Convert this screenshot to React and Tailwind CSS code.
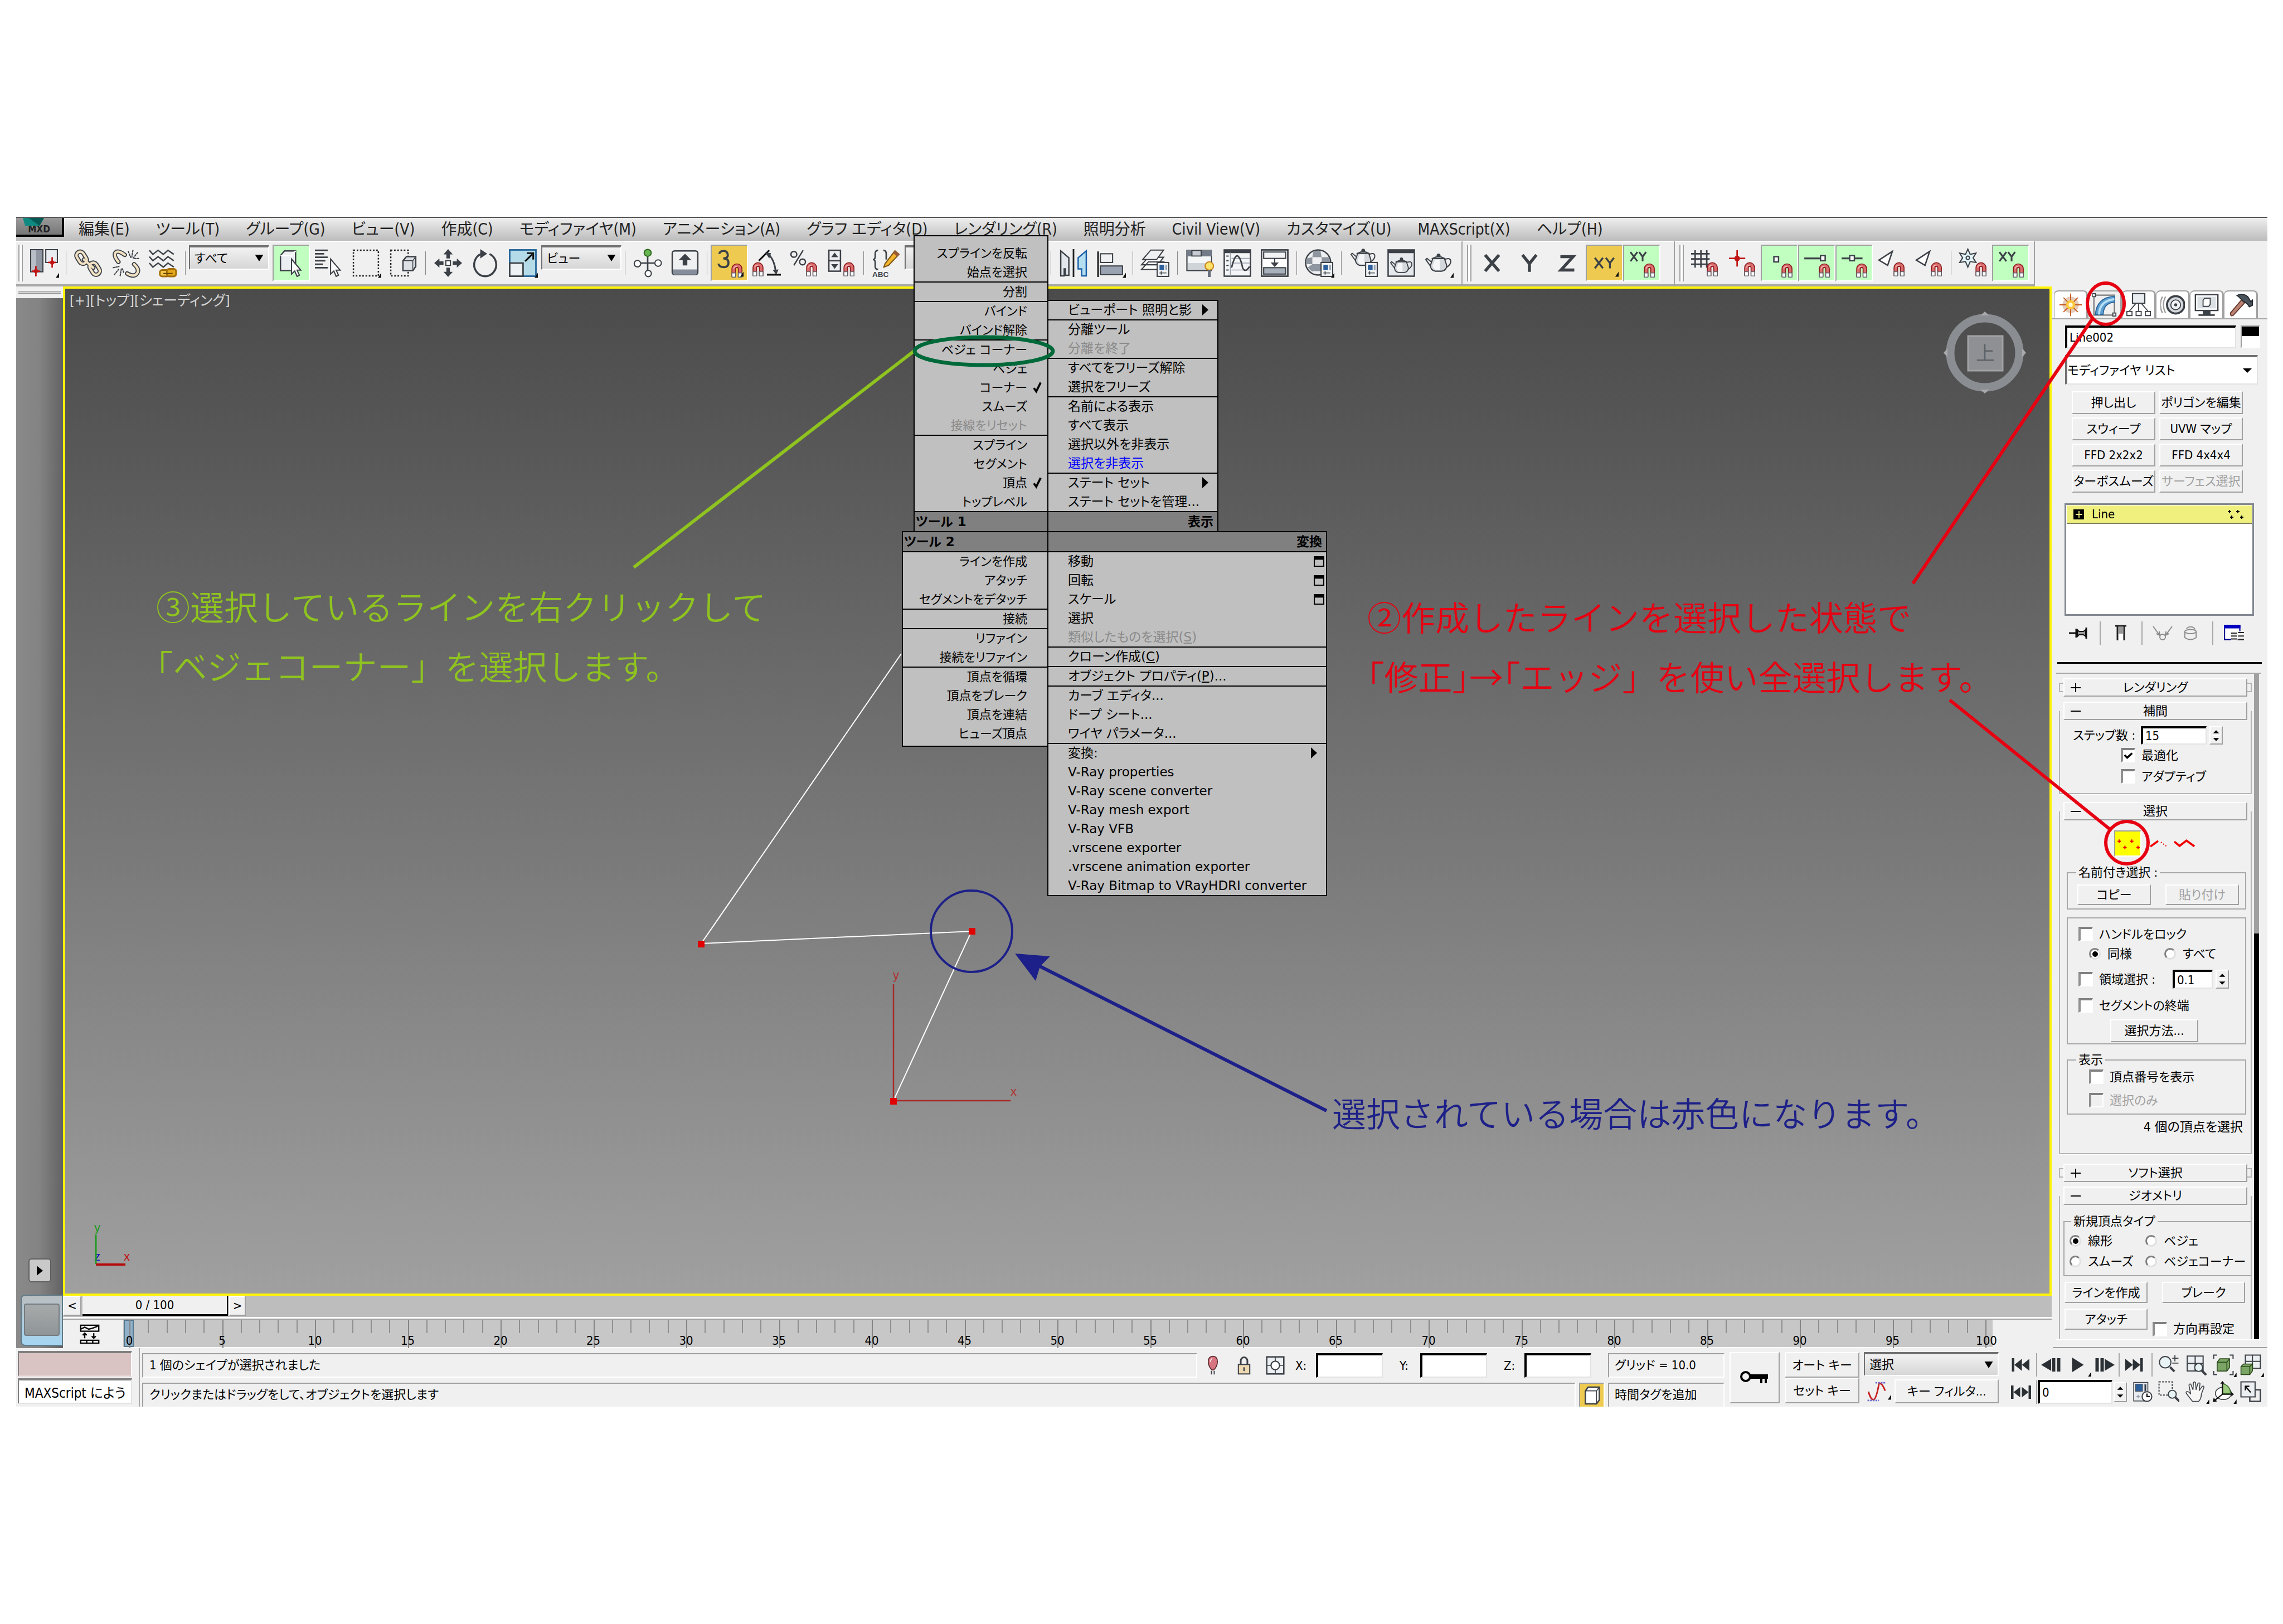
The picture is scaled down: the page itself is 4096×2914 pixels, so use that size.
/**
 * 3D modeller workspace with an annotated tutorial layer on top
 */
import { clsx } from 'clsx';

const RAISED = 'border-2 border-t-white border-l-white border-r-[#a0a0a0] border-b-[#a0a0a0] bg-[#f0f0f0]';
const SUNKEN = 'border-2 border-t-[#a0a0a0] border-l-[#a0a0a0] border-r-white border-b-white';
const FIELD = 'border-t-4 border-l-4 border-r-2 border-b-2 border-t-black border-l-black border-r-[#e3e3e3] border-b-[#e3e3e3] bg-white';
const INK = '#3c4147';

/* ---------- Icons ---------- */

const Magnet = ({ y = 0 }) => (
    <g transform={`translate(0 ${y})`}>
        <path d="M14 22.5V16a4.300 4.300 0 0 1 8.600 0v6.500h-3.100v-6.500a1.200 1.200 0 0 0-2.400 0v6.500z" fill="#dc6e70" stroke="#8a1a1a" strokeWidth=".8" />
        <path d="M14 19.5h3.1v3.6H14zM19.5 19.5h3.1v3.6h-3.1z" fill="#fff" stroke="#5d6570" strokeWidth=".7" />
        <path d="M15.4 15.8a3 3 0 0 1 3-2" fill="none" stroke="#f5b8b8" strokeWidth=".8" />
    </g>
);

const Panel = () => (
    <g>
        <rect x="13.5" y="11.5" width="10" height="12" fill="#f2f4f6" stroke={INK} />
        <rect x="15.5" y="13.5" width="4" height="4.5" fill="#2c5f9b" />
        <rect x="20.5" y="13.5" width="1.5" height="4.5" fill="#9aa4b2" />
        <path d="M15.5 20.5h6M17 19v3" stroke={INK} strokeWidth=".8" />
    </g>
);

const Pot = ({ x = 0, y = 0, s = 1 }) => (
    <g transform={`translate(${x} ${y}) scale(${s})`} stroke={INK} strokeWidth="1">
        <path d="M17 9q5-2 5.5 1t-4 6M7 12L2 8 1 9l5 7" fill="none" />
        <path d="M7 8h10l2 6q0 4-4 5H9q-4-1-4-5z" fill="#d4d8dc" />
        <path d="M9 9h4v9h-3q-3-1-3-4z" fill="#f5f6f7" stroke="none" />
        <path d="M7 8q5-3 10 0z" fill="#f5f6f7" />
        <circle cx="12" cy="5.5" r="1.2" fill={INK} />
    </g>
);

const ICONS = {
    layoutFlyout: (
        <>
            <path d="M.5.5h10.5v19H.5z" fill="#9097a3" stroke={INK} />
            <path d="M1 1h4v18H1z" fill="#b9bfc8" />
            <path d="M13.5.5h10v11h-10z" fill="#e8ebef" stroke={INK} />
            <path d="M5 14.5v9M1.5 19h7M19 7v9M15.5 11.5h7" stroke="#c01414" strokeWidth="1.3" />
            <circle cx="5" cy="19" r="1.8" fill="#c01414" />
            <circle cx="19" cy="11.5" r="1.8" fill="#c01414" />
        </>
    ),
    link: (
        <g fill="none" strokeLinecap="round">
            <g stroke={INK} strokeWidth="3.8">
                <rect x="2.5" y="1.8" width="6.5" height="11" rx="3.2" transform="rotate(-32 6 7)" />
                <rect x="14" y="11.5" width="6.5" height="11" rx="3.2" transform="rotate(-32 17 17)" />
                <path d="M8 9l8 7" />
            </g>
            <g stroke="#f3e3c4" strokeWidth="2">
                <rect x="2.5" y="1.8" width="6.5" height="11" rx="3.2" transform="rotate(-32 6 7)" />
                <rect x="14" y="11.5" width="6.5" height="11" rx="3.2" transform="rotate(-32 17 17)" />
                <path d="M8 9l8 7" />
            </g>
        </g>
    ),
    unlink: (
        <g fill="none" strokeLinecap="round">
            <g stroke={INK} strokeWidth="3.8">
                <path d="M5.5 11Q1 5.5 3 3t8 2M13 21q6 3.5 8.5 0T19 13" />
            </g>
            <g stroke="#f3e3c4" strokeWidth="2">
                <path d="M5.5 11Q1 5.5 3 3t8 2M13 21q6 3.5 8.5 0T19 13" />
            </g>
            <path d="M14 2l2 5M18 1l-1 6M22 3l-4 5M23 8h-4M1 16l5-1M2 22l4-5M7 23l1-6M10 20l-1-3" stroke={INK} strokeWidth="1" strokeDasharray="1.2 1.2" />
        </g>
    ),
    warp: (
        <>
            <path d="M0 1l3 3.5L7.5 1 12 4.5 16 1l5 3.5M0 6.5L3 10l4.5-3.5L12 10l4-3.5L21 10M0 12l3 3.5L7.500 12l4.500 3.500L16 12l5 3.500" fill="none" stroke={INK} strokeWidth="1.2" />
            <rect x="9" y="18" width="8" height="5.5" rx="2" fill="#f2c94c" stroke="#a36d00" strokeWidth="1.4" />
            <rect x="15" y="17" width="8" height="6.5" rx="2" fill="#e3a81c" stroke="#a36d00" strokeWidth="1.4" />
            <path d="M12 21h8" stroke="#6b4500" />
        </>
    ),
    select: (
        <>
            <path d="M2.5 5.5L6 1.5h9.5v13l-3.5 4H2.500z" fill="#eceff2" stroke={INK} strokeWidth="1.2" />
            <path d="M2.5 5.5H12v13M12 5.5l3.5-4" fill="none" stroke="#fff" strokeWidth="1.2" />
            <path d="M12 8.5v13l2.8-2.6 2 4.6 2-1-2-4.400H20z" fill="#fff" stroke={INK} />
        </>
    ),
    byName: (
        <>
            <path d="M0 1h11M0 4h8M0 7h11M0 10h9M0 13h7M0 16h11" stroke={INK} strokeWidth="1.4" />
            <path d="M13.5 8.5v13l2.8-2.6 2 4.6 2-1-2-4.400h3.400z" fill="#fff" stroke={INK} />
        </>
    ),
    rect: <rect x="1" y="1" width="21.5" height="22" fill="none" stroke="#222" strokeWidth="1.2" strokeDasharray="1.4 1.4" />,
    crossing: (
        <>
            <rect x="1" y="1" width="15" height="22" fill="none" stroke="#222" strokeWidth="1.2" strokeDasharray="1.4 1.4" />
            <path d="M11.5 10l3-3.5h8V15L20 18.5h-8.5z" fill="#dde1e5" stroke={INK} strokeWidth="1.2" />
            <path d="M11.5 10H20v8.5M20 10l2.5-3.5" fill="none" stroke={INK} strokeWidth=".7" />
        </>
    ),
    move: (
        <g fill={INK}>
            <path d="M12 0l4 4.5h-2.5v3.5h-3V4.5H8zM12 24l4-4.5h-2.5V16h-3v3.5H8zM0 12l4.5-4v2.5H8v3H4.5V16zM24 12l-4.5-4v2.5H16v3h3.5V16z" />
            <rect x="10" y="10" width="4" height="4" fill="#fff" stroke={INK} />
        </g>
    ),
    rotate: (
        <>
            <path d="M15.5 4.2A9.5 10 0 1 1 8.5 4" fill="none" stroke={INK} strokeWidth="1.7" />
            <path d="M7.5 0l6 4-6 4z" fill={INK} />
        </>
    ),
    scale: (
        <>
            <rect x=".7" y=".7" width="22.6" height="22.6" fill="#b5dbe9" stroke="#1d5f97" strokeWidth="1.3" />
            <rect x=".7" y="12" width="11.5" height="11.3" fill="#eef1f3" stroke={INK} strokeWidth="1.3" />
            <path d="M14 10.5l6-6M15.5 3.5h5.5V9" fill="none" stroke="#111" strokeWidth="1.5" />
        </>
    ),
    pivot: (
        <>
            <path d="M12 4v17M4 12h17" stroke={INK} strokeWidth="1.3" />
            <circle cx="12" cy="3.2" r="3" fill="#69b553" stroke="#2b6b1d" />
            <circle cx="3.2" cy="12.5" r="2.8" fill="#fff" stroke={INK} />
            <circle cx="21" cy="12" r="2.8" fill="#fff" stroke={INK} />
            <circle cx="12.5" cy="21" r="2.7" fill="#fff" stroke={INK} />
        </>
    ),
    override: (
        <>
            <rect x="1" y="1.5" width="22" height="20.5" rx="2" fill="#eef0f2" stroke={INK} strokeWidth="1.2" />
            <path d="M1.5 17.5h21V20q0 2-2 2h-17q-2 0-2-2z" fill="#868e9b" />
            <path d="M12 4l5.5 5.5H14V14h-4V9.5H6.5z" fill={INK} />
        </>
    ),
    snap3: (
        <>
            <path d="M3 4q1-2.500 4-2.500T10.500 5q0 3-4 3 4.500 0 4.500 3.800T6.800 15.500 2.500 12.500" fill="none" stroke={INK} strokeWidth="1.8" />
            <Magnet y={1} />
        </>
    ),
    angle: (
        <>
            <path d="M5 10L14 1M12 22h12" stroke="#111" strokeWidth="1.5" />
            <path d="M13 4q6 6 6.5 16" fill="none" stroke={INK} strokeWidth="1.4" />
            <path d="M10.5 3l5 .5-1.5 4.5zM17 18l5-.5-2 4.500z" fill={INK} />
            <g transform="translate(-14 0)"><Magnet /></g>
        </>
    ),
    percent: (
        <>
            <circle cx="3" cy="4.5" r="2.5" fill="none" stroke={INK} strokeWidth="1.2" />
            <circle cx="10.5" cy="11" r="2.5" fill="none" stroke={INK} strokeWidth="1.2" />
            <path d="M11 1L3 14" stroke={INK} strokeWidth="1.2" />
            <Magnet />
        </>
    ),
    spinner: (
        <>
            <rect x="1" y="1" width="10" height="18" fill="#eceef1" stroke={INK} strokeWidth="1.2" />
            <path d="M1 10h10" stroke={INK} strokeWidth="1.2" />
            <path d="M6 3l3 4H3zM6 17l3-4H3z" fill={INK} />
            <Magnet />
        </>
    ),
    nameSets: (
        <>
            <path d="M5 1Q2.5 1 2.5 4v2.5Q2.5 9 .5 9q2 0 2 2.5V15q0 2.5 2.5 2.500M9.500 1Q12 1 12 4v5" fill="none" stroke={INK} strokeWidth="1.3" />
            <path d="M11 12.5L19.5 1.5 23 4.5 14 14l-4 1.5z" fill="#f4b52e" stroke="#7a5313" />
            <path d="M19.5 1.5L23 4.5l-1.5 2-3.5-3z" fill="#9c5b3b" />
            <text x="0" y="24" fontSize="6.5" fontWeight="700" fontFamily="Liberation Sans" fill={INK}>ABC</text>
        </>
    ),
    mirror: (
        <>
            <path d="M1 1.5l7 6v15H5V17H4v6H1z" fill="#e2e5ea" stroke={INK} strokeWidth="1.2" />
            <path d="M12 0v24" stroke="#222" strokeWidth="1.4" />
            <path d="M23 1.5l-7 6V17h3v6h4z" fill="#b5dff0" stroke="#1d5fa7" strokeWidth="1.2" />
        </>
    ),
    align: (
        <>
            <path d="M1 2v22" stroke="#222" strokeWidth="1.5" />
            <rect x="3" y="4" width="10.5" height="7.5" fill="#eef0f2" stroke={INK} />
            <rect x="3" y="14.5" width="19" height="7.5" fill="#9aa3b1" stroke={INK} />
        </>
    ),
    layers: (
        <>
            <path d="M0 17.5h14L19 11H6zM0 13.5h14L19 7H6z" fill="#fff" stroke={INK} />
            <path d="M1 9h12L19 .8H8z" fill="#eef0f2" stroke={INK} />
            <Panel />
        </>
    ),
    ribbon: (
        <>
            <rect x=".7" y="1" width="21" height="17.5" fill="#cfd4d9" stroke={INK} />
            <path d="M1 1h21v5H1z" fill="#737b89" />
            <path d="M5 1h8v5H5z" fill="#c8ccd2" stroke={INK} />
            <path d="M1.5 6.5h20V12h-20z" fill="#f4f5f6" />
            <circle cx="20" cy="14.5" r="3.6" fill="#ffe36b" stroke="#c98318" />
            <path d="M20 18v6" stroke="#66707c" strokeWidth="2.5" />
        </>
    ),
    curve: (
        <>
            <rect x=".7" y=".7" width="22.6" height="22.6" fill="#f4f5f6" stroke={INK} strokeWidth="1.2" />
            <path d="M.5.5h23v3H.5z" fill={INK} />
            <path d="M6 3v20M7 8h16M7 12h16M7 18h16" stroke="#98a0aa" strokeWidth=".8" />
            <path d="M2.5 6h2M2.5 10h2M2.5 14h2M2.5 18h2" stroke={INK} />
            <path d="M7 16q3-12 5.5-10t4 10q2 5 6-1" fill="none" stroke={INK} strokeWidth="1.3" />
        </>
    ),
    schematic: (
        <>
            <rect x=".7" y=".7" width="22.6" height="22.6" fill="#fff" stroke={INK} strokeWidth="1.3" />
            <rect x="2.5" y="2.5" width="19" height="5.5" fill="#f2f3f5" stroke={INK} />
            <rect x="2.5" y="16" width="19" height="5.5" fill="#a8b0bc" stroke={INK} />
            <path d="M12 8v5" stroke={INK} />
            <path d="M8.5 11.5h7L12 15.5z" fill={INK} />
        </>
    ),
    material: (
        <>
            <circle cx="11" cy="11.5" r="10.8" fill="#eef0f2" stroke={INK} strokeWidth="1.2" />
            <path d="M7 1.500h6l1 5.500H6zM.8 8L6 7v6H.5zM14 7h6.500l1 5.500H14zM6 13h8v6H6zM2 16l4-3v6.500zM14 19h4l-4 3z" fill="#8f969f" />
            <Panel />
        </>
    ),
    renderSetup: (<><Pot x={0} y={-4} s={0.95} /><Panel /></>),
    frameWindow: (
        <>
            <rect x=".7" y=".7" width="22.6" height="22.6" fill="#e6e9ec" stroke={INK} strokeWidth="1.2" />
            <path d="M.5.5h23v3H.5z" fill={INK} />
            <Pot x={2} y={4} s={0.85} />
        </>
    ),
    render: <Pot />,
    axisX: <path d="M5.5 5l12 14M17.5 5l-12 14" stroke={INK} strokeWidth="2.6" />,
    axisY: <path d="M5.5 5l6 7.5 6-7.5M11.5 12v7.5" fill="none" stroke={INK} strokeWidth="2.6" />,
    axisZ: <path d="M6 6.5h11L6.5 18H18" fill="none" stroke={INK} strokeWidth="2.6" />,
    planeXY: <path d="M3.5 7.5l7 9M10.5 7.5l-7 9M13 7.5l3.5 4.5L20 7.5M16.5 12v4.5" fill="none" stroke={INK} strokeWidth="1.6" />,
    snapXY: (
        <>
            <path d="M2 2.5l6 8M8 2.5l-6 8M9.5 2.5l3 4 3-4M12.5 6.5v4" fill="none" stroke={INK} strokeWidth="1.5" />
            <Magnet y={1} />
        </>
    ),
    grid: (
        <>
            <path d="M3.5 1v15M8.5 1v15M13.5 1v15M0 4h16M0 8.5h16M0 13h16" stroke={INK} strokeWidth="1.3" />
            <Magnet />
        </>
    ),
    snapPivot: (
        <>
            <path d="M7.5 1v14M.5 8h14" stroke="#c01414" strokeWidth="1.3" />
            <circle cx="7.5" cy="8" r="2.4" fill="#c01414" />
            <Magnet />
        </>
    ),
    vertex: (<><rect x="7" y="6.5" width="4" height="4.5" fill="#fff" stroke={INK} strokeWidth="1.2" /><Magnet y={1} /></>),
    endpoint: (<><path d="M1 8h14" stroke={INK} strokeWidth="1.6" /><rect x="15" y="5.5" width="4" height="4.5" fill="#fff" stroke={INK} strokeWidth="1.2" /><Magnet y={1} /></>),
    midpoint: (<><path d="M1 8h18" stroke={INK} strokeWidth="1.6" /><rect x="8" y="5.5" width="4" height="4.5" fill="#fff" stroke={INK} strokeWidth="1.2" /><Magnet y={1} /></>),
    face: (<><path d="M12.5 2L1 9.5l7.5 4.5z" fill="#fff" stroke={INK} strokeWidth="1.2" /><Magnet /></>),
    freeze: (
        <>
            <path d="M7 0l2 4.500 5-1L11.500 7.500 14 11.500l-5-.8L7 15.500l-2-4.800-5 .8 2.500-4L0 3.500l5 1z" fill="#e4f6fa" stroke={INK} />
            <circle cx="7" cy="7.5" r="1.5" fill="none" stroke={INK} />
            <Magnet />
        </>
    ),
};

const Icon = ({ name, className = 'size-[50px]' }) => (
    <svg viewBox="0 0 24 24" className={clsx('shrink-0 overflow-visible', className)} aria-hidden="true">{ICONS[name]}</svg>
);

const Corner = () => (
    <svg viewBox="0 0 4 6" className="absolute right-1.5 bottom-1.5 h-2.5 w-1.5" aria-hidden="true"><path d="M4 0v6H0z" fill="#111" /></svg>
);

/* ---------- Toolbar ---------- */

const ToolButton = ({ icon, tone, flyout }) => (
    <button
        aria-label={icon}
        className={clsx(
            'relative flex h-[66px] w-[67px] shrink-0 items-center justify-center',
            tone && SUNKEN,
            tone === 'green' && 'bg-[#c1ffc1]',
            tone === 'amber' && 'bg-[#eecb50]',
        )}
    >
        <Icon name={icon} />
        {flyout && <Corner />}
    </button>
);

const Sep = () => <div className="mx-[6px] h-[42px] w-px shrink-0 bg-[#8c8c8c]" />;
const Grip = () => <div className="mx-1 h-[66px] w-[8px] shrink-0 border-x-2 border-[#a0a0a0] bg-white" />;

const DropDown = ({ label, value, className }) => (
    <div className={clsx('relative flex shrink-0 self-start border-2 border-t-4 border-[#707070] border-r-white border-b-white bg-linear-to-b from-[#f2f2f2] to-[#d6d6d6]', className)}>
        <select aria-label={label} className="w-full appearance-none pl-2 text-[22px]">
            <option>{value}</option>
        </select>
        <svg viewBox="0 0 10 8" className="pointer-events-none absolute top-1/2 right-2 h-3 w-4 -translate-y-1/2" aria-hidden="true"><path d="M0 0h10L5 8z" fill="#000" /></svg>
    </div>
);

const MENUS = ['編集(E)', 'ツール(T)', 'グループ(G)', 'ビュー(V)', '作成(C)', 'モディファイヤ(M)', 'アニメーション(A)', 'グラフ エディタ(D)', 'レンダリング(R)', '照明分析', 'Civil View(V)', 'カスタマイズ(U)', 'MAXScript(X)', 'ヘルプ(H)'];

const MenuBar = () => (
    <nav className="flex h-[43px] shrink-0 items-center border-t-2 border-[#555] bg-linear-to-b from-[#efefef] to-[#bcbcbc] text-[28px] text-[#222]">
        <button className="relative mr-[26px] flex h-[34px] w-[86px] shrink-0 items-end justify-center self-start border-r-4 border-b-4 border-black bg-linear-to-b from-[#9a9a9a] to-[#777] text-[17px] leading-[19px] font-bold">
            <svg viewBox="0 0 48 14" className="absolute top-0 left-3 h-3.5 w-12" aria-hidden="true"><path d="M0 0h38l-8 14H4z" fill="#0e8a80" /><path d="M10 0h28l-8 14z" fill="#075a56" /></svg>
            MXD
        </button>
        <ul className="flex gap-[47px] leading-[36px] whitespace-nowrap">
            {MENUS.map((m) => (
                <li key={m}><button>{m}</button></li>
            ))}
        </ul>
    </nav>
);

const BAR = 'flex h-[82px] items-center border-t-2 border-b-4 border-r-2 border-t-white border-b-[#a8a8a8] border-r-[#a0a0a0]';

const ToolBar = () => (
    <div className="flex shrink-0 bg-[#f0f0f0]">
        <div className={BAR}>
            <Grip />
            <ToolButton icon="layoutFlyout" flyout />
            <Sep />
            <ToolButton icon="link" />
            <ToolButton icon="unlink" />
            <ToolButton icon="warp" />
            <Sep />
            <DropDown label="選択フィルタ" value="すべて" className="mt-1.5 mr-[6px] h-[44px] w-[144px]" />
            <ToolButton icon="select" tone="green" />
            <ToolButton icon="byName" />
            <ToolButton icon="rect" flyout />
            <ToolButton icon="crossing" />
            <Sep />
            <ToolButton icon="move" />
            <ToolButton icon="rotate" />
            <ToolButton icon="scale" flyout />
            <DropDown label="参照座標系" value="ビュー" className="mt-1.5 h-[44px] w-[144px]" />
            <Sep />
            <ToolButton icon="pivot" />
            <ToolButton icon="override" />
            <Sep />
            <ToolButton icon="snap3" tone="amber" flyout />
            <ToolButton icon="angle" />
            <ToolButton icon="percent" />
            <ToolButton icon="spinner" />
            <Sep />
            <ToolButton icon="nameSets" />
            <DropDown label="選択セット" value="" className="mt-1.5 h-[44px] w-[256px]" />
            <Sep />
            <ToolButton icon="mirror" />
            <ToolButton icon="align" flyout />
            <Sep />
            <ToolButton icon="layers" />
            <Sep />
            <ToolButton icon="ribbon" />
            <ToolButton icon="curve" />
            <ToolButton icon="schematic" />
            <Sep />
            <ToolButton icon="material" flyout />
            <Sep />
            <ToolButton icon="renderSetup" />
            <ToolButton icon="frameWindow" />
            <ToolButton icon="render" flyout />
            <div className="w-2" />
        </div>
        <div className={clsx(BAR, 'pr-6 pl-1')}>
            <Grip />
            <ToolButton icon="axisX" />
            <ToolButton icon="axisY" />
            <ToolButton icon="axisZ" />
            <ToolButton icon="planeXY" tone="amber" flyout />
            <ToolButton icon="snapXY" tone="green" />
        </div>
        <div className={clsx(BAR, 'pr-2 pl-1')}>
            <Grip />
            <ToolButton icon="grid" />
            <ToolButton icon="snapPivot" />
            <ToolButton icon="vertex" tone="green" />
            <ToolButton icon="endpoint" tone="green" />
            <ToolButton icon="midpoint" tone="green" />
            <ToolButton icon="face" />
            <ToolButton icon="face" />
            <Sep />
            <ToolButton icon="freeze" />
            <ToolButton icon="snapXY" tone="green" />
        </div>
    </div>
);

/* ---------- Viewport ---------- */

const SideRail = () => (
    <div className="flex w-[84px] shrink-0 flex-col">
        <div className="h-[21px] px-1 pt-2"><div className="h-[5px] border-y-2 border-t-[#b8b8b8] border-b-[#8f8f8f]" /></div>
        <div className="flex flex-1 flex-col items-center justify-end bg-linear-to-r from-[#8a8a8a] via-[#838383] to-[#636363] pb-1">
            <button aria-label="再生パネルを開く" className="flex h-[43px] w-[41px] items-center justify-center rounded-md border-2 border-[#5f5f5f] bg-[#c9c9c9]">
                <svg viewBox="0 0 10 16" className="h-[18px] w-[11px]" aria-hidden="true"><path d="M0 0l10 8-10 8z" /></svg>
            </button>
            <div className="mt-[22px] ml-[8px] flex h-[92px] w-[76px] rounded-l-lg border-2 border-[#5f7a88] bg-linear-to-b from-[#b9bec1] to-[#a5d6f2] pt-3.5 pr-[4px] pb-[16px] pl-1">
                <button aria-label="レイアウト" className="flex-1 rounded-sm border-2 border-[#747b80] bg-linear-to-b from-[#a7aaab] to-[#8f9597]" />
            </div>
        </div>
    </div>
);

const Viewport = () => (
    <main className="relative min-h-0 flex-1 border-4 border-[#fff30a] bg-linear-to-b from-[#4b4b4b] to-[#a0a0a0]">
        <p className="px-2 pt-1 text-[25px] leading-[36px] text-[#d6d6d6]">[+][トップ][シェーディング]</p>
        <svg viewBox="117 518 3560 1803" preserveAspectRatio="none" className="absolute inset-0 h-full w-full" aria-hidden="true">
            <path d="M1617 1173L1258 1693 1743 1671 1603 1975" fill="none" stroke="#fff" strokeWidth="2" />
            <path d="M1603 1975V1766M1603 1975H1813" fill="none" stroke="#a82a2a" strokeWidth="2.5" />
            <g fill="#e00000">
                <rect x="1252" y="1688" width="12" height="12" />
                <rect x="1738" y="1665" width="12" height="12" />
                <rect x="1597" y="1970" width="12" height="12" />
            </g>
            <g fontFamily="Liberation Sans" fontSize="22">
                <text x="1602" y="1757" fill="#b03030">y</text>
                <text x="1813" y="1966" fill="#b03030">x</text>
                <text x="169" y="2210" fill="#1e9a1e">y</text>
                <text x="169" y="2262" fill="#1010c0">z</text>
                <text x="222" y="2262" fill="#c01010">x</text>
            </g>
            <path d="M172 2216v52" stroke="#1e9a1e" strokeWidth="3" />
            <path d="M172 2269h53" stroke="#b40c0c" strokeWidth="4" />
            <circle cx="3561" cy="633" r="62" fill="none" stroke="#8a8d92" strokeWidth="15" />
            <g fill="#a7a9ad">
                <path d="M3553 566h16l-8-7zM3553 699h16l-8 7zM3494 625v16l-7-8zM3628 625v16l7-8z" />
            </g>
            <rect x="3531" y="603" width="62" height="62" fill="#8f9093" stroke="#a2a3a6" strokeWidth="3" />
            <text x="3562" y="646" textAnchor="middle" fontSize="34" fontFamily="'Noto Sans CJK JP'" fill="#606166">上</text>
        </svg>
    </main>
);

const GROUPS = Array.from({ length: 20 }, (_, i) => i * 5);

const FrameMark = ({ n }) => (
    <span className="absolute top-[26px] left-0 -translate-x-1/2 text-[22px] leading-[24px]">{n}</span>
);

const TimeLine = () => (
    <div className="shrink-0">
        <div className="flex h-[41px] border-b-3 border-white bg-[#bdbdbd]">
            <button className={clsx(RAISED, 'mr-[2px] h-[36px] w-[33px] text-[22px] leading-[32px]')}>&lt;</button>
            <button className="h-[36px] w-[261px] border-r-2 border-b-3 border-black bg-[#f0f0f0] text-[22px] leading-[34px]">0 / 100</button>
            <button className={clsx(RAISED, 'ml-[2px] h-[36px] w-[30px] text-[22px] leading-[32px]')}>&gt;</button>
        </div>
        <div className="flex h-[53px] border-t-2 border-[#a0a0a0]">
            <button aria-label="ミニ カーブ エディタを開く" className="flex w-[108px] shrink-0 items-center justify-center bg-[#f0f0f0] pr-3">
                <svg viewBox="0 0 20 20" className="h-[36px] w-[36px]" fill="none" stroke="#000" strokeWidth="1.3" aria-hidden="true">
                    <path d="M1 1h18v6H1zM1 5l4-2 4 2 4-1 5-2M5 14V9M3 11l2-2 2 2M14 9v5M12 12l2 2 2-2M1 16h18v3H1zM7 16v3M13 16v3" />
                </svg>
            </button>
            <div className="mr-[106px] flex flex-1 border-b-2 border-white bg-[#c7c7c7] pr-[11px] pl-[11px]">
                {GROUPS.map((g) => (
                    <div key={g} className={clsx('relative flex flex-1', g === 0 && 'before:absolute before:inset-y-0 before:-left-[10px] before:w-[18px] before:border-2 before:border-[#56788f] before:bg-[#8fb0c8]')}>
                        <div className="relative h-[51px] flex-1 border-l-2 border-[#858585]" />
                        <div className="h-[24px] flex-1 border-l-2 border-[#8f8f8f]" />
                        <div className="h-[24px] flex-1 border-l-2 border-[#8f8f8f]" />
                        <div className="h-[24px] flex-1 border-l-2 border-[#8f8f8f]" />
                        <div className="h-[24px] flex-1 border-l-2 border-[#8f8f8f]" />
                        <FrameMark n={g} />
                    </div>
                ))}
                <div className="relative h-[51px] border-l-2 border-[#858585]"><FrameMark n={100} /></div>
            </div>
        </div>
    </div>
);

/* ---------- Command panel ---------- */

const PushButton = ({ children, disabled, className }) => (
    <button disabled={disabled} className={clsx(RAISED, 'flex items-center justify-center whitespace-nowrap disabled:text-[#a0a0a0]', className)}>{children}</button>
);

const Check = ({ label, checked, disabled, className }) => (
    <label className={clsx('flex items-center', disabled && 'text-[#a0a0a0]', className)}>
        <span className="relative mr-[11px] flex size-[26px] shrink-0">
            <input type="checkbox" defaultChecked={checked} disabled={disabled} className="peer size-full appearance-none border-t-4 border-l-4 border-r-2 border-b-2 border-t-[#808080] border-l-[#909090] border-r-white border-b-white bg-white disabled:bg-[#f0f0f0]" />
            <svg viewBox="0 0 14 14" className="pointer-events-none absolute inset-1 hidden size-[19px] peer-checked:block" aria-hidden="true"><path d="M2 6.5l3.5 3.5L12 4" fill="none" stroke="#000" strokeWidth="2.6" /></svg>
        </span>
        {label}
    </label>
);

const Radio = ({ label, name, checked, className }) => (
    <label className={clsx('flex items-center', className)}>
        <span className="relative mr-[12px] flex size-[21px] shrink-0">
            <input type="radio" name={name} defaultChecked={checked} className="peer size-full appearance-none rounded-full border-3 border-t-[#808080] border-l-[#808080] border-r-[#e0e0e0] border-b-[#e0e0e0] bg-white" />
            <span className="pointer-events-none absolute top-1.5 left-1.5 hidden size-[10px] rounded-full bg-black peer-checked:block" />
        </span>
        {label}
    </label>
);

const Arrows = ({ className }) => (
    <button aria-label="増減" className={clsx(RAISED, 'flex w-[24px] items-center justify-center', className)}>
        <svg viewBox="0 0 12 24" className="h-[26px] w-[14px]" aria-hidden="true"><path d="M6 3l5 5H1zM6 21l5-5H1z" /><path d="M0 12h12" stroke="#fff" strokeWidth="1.5" /></svg>
    </button>
);

const RolloutHead = ({ title, open }) => (
    <div className="relative px-2">
        {!open && <div className="absolute inset-x-0 top-2 h-[17px] border-2 border-[#b4b4b4]" />}
        <button aria-expanded={open} className={clsx(RAISED, 'relative flex h-[33px] w-full items-center justify-center')}>
            <svg viewBox="0 0 20 20" className="absolute left-[10px] size-[20px]" aria-hidden="true"><path d={open ? 'M1 10h18' : 'M1 10h18M10 2v16'} stroke="#000" strokeWidth="2" /></svg>
            {title}
        </button>
    </div>
);

const BODY = '-mt-[16px] border-2 border-t-0 border-[#b4b4b4] shadow-[1px_1px_0_#fff]';
const BOX = 'border-2 border-[#a8a8a8]';

const TABS = {
    作成: (
        <>
            <circle cx="12" cy="12" r="8" fill="#d6a88a" opacity=".6" />
            <path d="M12 1v22M1 12h22M5 5l14 14M19 5L5 19" stroke="#c0561c" strokeWidth="1" />
            <circle cx="12" cy="12" r="4.5" fill="#ffc83a" />
            <circle cx="12" cy="12" r="2" fill="#fffbe0" />
        </>
    ),
    修正: (
        <>
            <path d="M1.5 3v19h20V4M3 2.5h19" fill="none" stroke="#777" strokeWidth="1.2" />
            <path d="M3 21.5Q4 5 21.5 3.5v6Q11 10 10.5 21.5z" fill="#5e9fd0" stroke="#2a669b" />
            <path d="M6.5 21.5Q7 8 21.5 6.5" fill="none" stroke="#b8e0f5" strokeWidth="2" />
            <rect x="0" y="1" width="3" height="3" fill="#fff" stroke={INK} />
            <rect x="20" y="20" width="3" height="3" fill="#fff" stroke={INK} />
        </>
    ),
    階層: (
        <>
            <rect x="6" y="1" width="12" height="9.5" fill="#e9edf0" stroke={INK} strokeWidth="1.2" />
            <path d="M12 10v8M9 11l-6 7M15 11l6 7" stroke={INK} />
            <path d="M.5 18.5h5v4h-5zM9.5 18.5h5v4h-5zM18.5 18.5h5v4h-5z" fill="#fff" stroke={INK} />
        </>
    ),
    モーション: (
        <>
            <path d="M2 4q-4 8 0 16M5 4q-4 8 0 16" fill="none" stroke="#9a9a9a" strokeWidth="1.2" />
            <circle cx="15" cy="12" r="8.5" fill="#d5d9de" stroke={INK} strokeWidth="2" />
            <circle cx="15" cy="12" r="4.8" fill="#f1f3f5" stroke={INK} />
            <circle cx="15" cy="12" r="1.5" fill={INK} />
        </>
    ),
    表示: (
        <>
            <rect x="1" y="2" width="22" height="15.5" fill="#fff" stroke={INK} strokeWidth="1.3" />
            <rect x="3" y="4" width="18" height="11.5" fill="#dbe0e5" />
            <path d="M8.5 7.5l1.5-2h5.5v6l-1.500 2H8.500z" fill="#fff" stroke={INK} />
            <path d="M9 18.5h6v2H9zM4 22h16" fill={INK} stroke={INK} strokeWidth="1.5" />
        </>
    ),
    ユーティリティ: (
        <>
            <path d="M2 20L13 7l3 3L4.5 22.5q-2.5 1-2.500-2.500z" fill="#b98272" stroke="#66382c" />
            <path d="M8 3q6-3 11 1l3 5 1.500-1.500 0 5-3 1.500-2-3-4-2.500-4-4q-1-1.500-2.500-1.500z" fill="#4a525b" stroke="#24292e" />
        </>
    ),
};

const MODIFIERS = ['押し出し', 'ポリゴンを編集', 'スウィープ', 'UVW マップ', 'FFD 2x2x2', 'FFD 4x4x4', 'ターボスムーズ', 'サーフェス選択'];

const VLine = ({ className }) => <span className={clsx('h-[42px] w-[2px] shrink-0 bg-[#a8a8a8]', className)} />;

const CommandPanel = () => (
    <aside className="flex w-[387px] shrink-0 flex-col bg-[#f0f0f0]">
        <div role="tablist" className="mt-[7px] flex h-[52px] border-b-2 border-[#a8a8a8] pl-1">
            {Object.entries(TABS).map(([name, art]) => (
                <button key={name} role="tab" aria-label={name} aria-selected={name === '修正'} className={clsx('flex w-[61px] items-center justify-center rounded-t-lg border-t-2 border-r-3 border-l border-[#a0a0a0]', name === '修正' ? 'bg-[#f0f0f0]' : 'bg-white')}>
                    <svg viewBox="0 0 24 24" className="size-[44px]" aria-hidden="true">{art}</svg>
                </button>
            ))}
        </div>
        <div className="mt-[11px] flex h-[41px] pl-6">
            <input aria-label="オブジェクト名" defaultValue="Line002" className={clsx(FIELD, 'w-[307px] pl-1 text-[22px]')} />
            <button aria-label="オブジェクト カラー" className="ml-2 w-[35px] border-2 border-[#a0a0a0] border-r-white border-b-white bg-white pb-5"><span className="block h-full bg-black" /></button>
        </div>
        <div className="relative mt-3 ml-6 flex h-[53px] w-[346px] border-2 border-t-4 border-l-4 border-[#707070] border-r-[#e3e3e3] border-b-[#e3e3e3] bg-white">
            <select aria-label="モディファイヤ リスト" className="w-full appearance-none text-[22px]">
                <option>モディファイヤ リスト</option>
            </select>
            <svg viewBox="0 0 10 5" className="pointer-events-none absolute top-5 right-2 h-[8px] w-[18px]" aria-hidden="true"><path d="M0 0h10L5 5z" /></svg>
        </div>
        <div className="mt-3 grid grid-cols-[150px_150px] gap-x-[7px] gap-y-[6px] pl-9">
            {MODIFIERS.map((m) => (
                <PushButton key={m} disabled={m === 'サーフェス選択'} className="h-[41px]">{m}</PushButton>
            ))}
        </div>
        <div className="mt-[19px] ml-[23px] h-[202px] w-[340px] border-3 border-[#828790] bg-white p-px">
            <div className="flex h-[33px] items-center border-b-2 border-[#808060] bg-[#f0f07f] pr-3 pl-3">
                <span className="flex h-[18px] w-[19px] items-center justify-center bg-black">
                    <svg viewBox="0 0 10 10" className="size-[12px]" aria-hidden="true"><path d="M0 5h10M5 0v10" stroke="#f0f07f" strokeWidth="1.5" /></svg>
                </span>
                <span className="ml-3.5 flex-1">Line</span>
                <svg viewBox="0 0 30 18" className="h-[18px] w-[32px]" aria-hidden="true"><path d="M0 4h6M3 1v6M15 4h6M18 1v6M4 14h6M7 11v6M22 14h6M25 11v6" stroke="#000" strokeWidth="2" /></svg>
            </div>
        </div>
        <div className="flex h-[62px] shrink-0 items-center pl-[31px]">
            <button aria-label="スタックを固定">
                <svg viewBox="0 0 34 24" className="h-[26px] w-[34px]" aria-hidden="true"><path d="M0 12h13M13 4v16M31 2v20" stroke="#111" strokeWidth="3" /><path d="M15 6l3 3h8l4-3v12l-4-3h-8l-3 3z" fill="#9a9a9a" stroke="#111" strokeWidth="2" /></svg>
            </button>
            <VLine className="ml-[21px]" />
            <button aria-label="最終結果を表示" className="ml-[24px]">
                <svg viewBox="0 0 24 30" className="h-[32px] w-[24px]" aria-hidden="true"><path d="M2 2h20M6 2v26M18 2v26" stroke="#222" strokeWidth="3" /><path d="M8 4h8v12H8z" fill="#999" /><path d="M8 16h8v12H8z" fill="#fff" /></svg>
            </button>
            <VLine className="ml-[25px]" />
            <button aria-label="固有にする" className="ml-[18px]">
                <svg viewBox="0 0 36 30" className="h-[34px] w-[36px]" fill="none" stroke="#8a8a8a" strokeWidth="2" aria-hidden="true"><path d="M1 3l11 15M35 3L24 18M7 16l6 3-1-7M29 16l-6 3 1-7" /><circle cx="18" cy="22" r="5" /></svg>
            </button>
            <button aria-label="モディファイヤを除去" className="ml-[20px]">
                <svg viewBox="0 0 26 30" className="h-[34px] w-[24px]" fill="none" stroke="#8a8a8a" strokeWidth="2" aria-hidden="true"><path d="M2 12v12q11 7 22 0V12M5 6q8-6 15-1l2 3" /><ellipse cx="13" cy="12" rx="11" ry="4" /></svg>
            </button>
            <VLine className="ml-[27px]" />
            <button aria-label="モディファイヤ セットを設定" className="ml-[18px]">
                <svg viewBox="0 0 36 30" className="h-[34px] w-[38px]" aria-hidden="true"><path d="M2 2h26v24H2z" fill="#fff" stroke="#00008c" strokeWidth="2" /><path d="M1 1h28v6H1z" fill="#0000c0" /><path d="M13 14h10v14H13zM24 12h11v15H24z" fill="#f0f0f0" /><path d="M13 15h10M13 20h10M13 25h10M25 14h10M25 20h10M25 26h10" stroke="#222" strokeWidth="2" /></svg>
            </button>
        </div>
        <div className="mx-[10px] mt-[21px] border-t-3 border-black" />
        <div className="mt-4 mr-[11px] ml-2 flex min-h-0 flex-1 border-t-2 border-b-2 border-t-[#a8a8a8] border-b-white">
            <div className="w-[351px] overflow-hidden pt-2 pl-[5px]">
                <RolloutHead title="レンダリング" />
                <div className="h-[9px]" />
                <RolloutHead title="補間" open />
                <div className={clsx(BODY, 'h-[149px] pt-[27px]')}>
                    <div className="flex h-[33px] items-center">
                        <label htmlFor="steps" className="w-[145px] pl-[23px]">ステップ数 :</label>
                        <input id="steps" defaultValue="15" className={clsx(FIELD, 'h-[33px] w-[118px] pl-1 text-[22px]')} />
                        <Arrows className="ml-[5px] h-[33px]" />
                    </div>
                    <Check label="最適化" checked className="h-[38px] pl-[109px]" />
                    <Check label="アダプティブ" className="h-[38px] pl-[109px]" />
                </div>
                <div className="h-[14px]" />
                <RolloutHead title="選択" open />
                <div className={clsx(BODY, 'h-[615px] pt-[34px] pr-2 pl-3')}>
                    <div className="flex h-[47px] items-center pl-[85px]">
                        <button aria-label="頂点" className={clsx(SUNKEN, 'h-[47px] w-[49px] bg-[#ffff00]')}>
                            <svg viewBox="0 0 44 40" className="size-full" aria-hidden="true"><path d="M4 16h6M7 13v6M26 16h6M29 13v6M14 27h6M17 24v6M37 27h6M40 24v6" stroke="#f00000" strokeWidth="2" /></svg>
                        </button>
                        <button aria-label="セグメント" className="ml-[15px]">
                            <svg viewBox="0 0 34 20" className="h-[20px] w-[34px]" fill="none" stroke="#f00000" aria-hidden="true"><path d="M1 15L15 5" strokeWidth="3.5" /><path d="M20 7l12 9" strokeWidth="2" strokeDasharray="2 3" /></svg>
                        </button>
                        <button aria-label="スプライン" className="ml-[9px]">
                            <svg viewBox="0 0 40 20" className="h-[20px] w-[38px]" fill="none" stroke="#f00000" strokeWidth="4" aria-hidden="true"><path d="M1 6l10 8L24 4l15 11" /></svg>
                        </button>
                    </div>
                    <fieldset className={clsx(BOX, 'mt-[12px] flex gap-[26px] pt-[5px] pb-[6px] pl-[17px]')}>
                        <legend className="-ml-[2px] h-[33px] px-1 leading-[33px] whitespace-nowrap">名前付き選択 :</legend>
                        <PushButton className="h-[37px] w-[132px]">コピー</PushButton>
                        <PushButton disabled className="h-[37px] w-[132px]">貼り付け</PushButton>
                    </fieldset>
                    <div className={clsx(BOX, 'mt-[14px] pt-[10px] pb-[2px] pl-[19px]')}>
                        <Check label="ハンドルをロック" className="h-[36px]" />
                        <div className="flex h-[34px] items-center pl-[19px]">
                            <Radio name="handle" label="同様" checked className="w-[135px]" />
                            <Radio name="handle" label="すべて" />
                        </div>
                        <div className="flex h-[58px] items-center">
                            <Check label="領域選択 :" className="w-[169px] whitespace-nowrap" />
                            <input aria-label="領域選択の値" defaultValue="0.1" className={clsx(FIELD, 'h-[34px] w-[72px] pl-1 text-[22px]')} />
                            <Arrows className="ml-[5px] h-[34px]" />
                        </div>
                        <Check label="セグメントの終端" className="h-[36px]" />
                        <PushButton className="mt-[7px] ml-[57px] h-[41px] w-[158px]">選択方法...</PushButton>
                    </div>
                    <fieldset className={clsx(BOX, 'mt-[11px] pb-[10px] pl-[38px]')}>
                        <legend className="-ml-[23px] h-[33px] px-1 leading-[33px]">表示</legend>
                        <Check label="頂点番号を表示" className="h-[28px]" />
                        <Check label="選択のみ" disabled className="mt-[14px] h-[28px]" />
                    </fieldset>
                    <p className="mr-[6px] text-right text-[23px] leading-[44px]">4 個の頂点を選択</p>
                </div>
                <div className="h-[17px]" />
                <RolloutHead title="ソフト選択" />
                <div className="h-[8px]" />
                <RolloutHead title="ジオメトリ" open />
                <div className={clsx(BODY, 'h-[300px] pt-[29px] pl-[6px]')}>
                    <fieldset className={clsx(BOX, 'border-r-0 pb-[6px] pl-[9px]')}>
                        <legend className="ml-[3px] h-[33px] px-1 leading-[33px]">新規頂点タイプ</legend>
                        <div className="grid grid-cols-[136px_1fr] whitespace-nowrap">
                            <Radio name="vtype" label="線形" checked className="h-[37px]" />
                            <Radio name="vtype" label="ベジェ" className="h-[37px]" />
                            <Radio name="vtype" label="スムーズ" className="h-[37px]" />
                            <Radio name="vtype" label="ベジェコーナー" className="h-[37px]" />
                        </div>
                    </fieldset>
                    <div className="mt-[10px] grid grid-cols-[149px_149px] gap-x-[26px] gap-y-[10px] pl-[2px]">
                        <PushButton className="h-[38px]">ラインを作成</PushButton>
                        <PushButton className="h-[38px]">ブレーク</PushButton>
                        <PushButton className="h-[38px]">アタッチ</PushButton>
                        <Check label="方向再設定" className="mt-[20px] -ml-[17px] whitespace-nowrap" />
                        <PushButton className="h-[38px]" />
                    </div>
                </div>
            </div>
            <div className="ml-1 flex w-[9px] flex-col bg-black"><div className="h-[466px] bg-[#a0a0a0]" /></div>
        </div>
        <div className="mt-3 ml-0.5 border-t-2 border-[#a0a0a0]" />
    </aside>
);

/* ---------- Status bar ---------- */

const PLAY = {
    start: <path d="M1 3h3v18H1zM4 12l9-8v16zM13 12l9-8v16z" />,
    prev: <path d="M0 12l12-8v16zM13 3h4v18h-4zM19 3h4v18h-4z" />,
    play: <path d="M5 2l14 10L5 22z" />,
    next: <path d="M24 12L12 4v16zM11 3H7v18h4zM5 3H1v18h4z" />,
    end: <path d="M23 3h-3v18h3zM20 12l-9-8v16zM11 12L2 4v16z" />,
    key: <path d="M0 3h3v18H0zM21 3h3v18h-3zM3 12l8-7v14zM21 12l-8-7v14z" />,
};

const Play = ({ kind, className = 'w-[48px]', flyout }) => (
    <button aria-label={kind} className={clsx('relative flex h-[42px] shrink-0 items-center justify-center', className)}>
        <svg viewBox="0 0 24 24" preserveAspectRatio="none" className="h-[32px] w-[36px]" fill="#2b3035" aria-hidden="true">{PLAY[kind]}</svg>
        {flyout && <svg viewBox="0 0 4 6" className="absolute right-0 bottom-0 h-2 w-1.5" aria-hidden="true"><path d="M4 0v6H0z" /></svg>}
    </button>
);

const Lens = ({ x, y, r }) => (
    <>
        <path d={`M${x + r - 1} ${y + r - 1}L${x + r + 4} ${y + r + 4}`} stroke={INK} strokeWidth="2.6" />
        <circle cx={x} cy={y} r={r} fill="#e8f3f6" stroke={INK} strokeWidth="1.2" />
    </>
);

const NAV = {
    zoom: (<><Lens x={8} y={9} r={6.5} /><path d="M19 1v7M16 4.5h7M16 10h7" stroke={INK} strokeWidth="1.2" /></>),
    zoomAll: (<><path d="M2 2h18v17H2zM11 2v17M2 10.5h18" fill="#eceff1" stroke={INK} strokeWidth="1.3" /><Lens x={15} y={15} r={4.5} /></>),
    extents: (
        <>
            <path d="M1 5V1h4M19 1h4v4M1 19v4h4M19 23h4v-4" fill="none" stroke={INK} strokeWidth="1.3" />
            <path d="M5 9l3-4h11v10l-3 4H5z" fill="#7ba564" stroke="#2b4a1d" />
            <path d="M5 9h11v10M16 9l3-4" fill="none" stroke="#2b4a1d" />
        </>
    ),
    extentsAll: (
        <>
            <path d="M6 1h17v15H6zM14 1v15M6 8h17" fill="#eceff1" stroke={INK} strokeWidth="1.3" />
            <path d="M1 14l3-3h10v8l-3 4H1z" fill="#7ba564" stroke="#2b4a1d" />
            <path d="M1 14h10v9M11 14l3-3" fill="none" stroke="#2b4a1d" />
        </>
    ),
    region: (<><path d="M1 1h15v15H1z" fill="none" stroke={INK} strokeWidth="1.3" strokeDasharray="2 1.5" /><Lens x={16} y={15} r={4.5} /></>),
    pan: <path d="M8 23q-4-5-7-9-1-2 1-2t4 3L4 5q0-2 2-1.5L8.500 10 9 2q1-2 2.500 0l.5 8 2-7q1.500-2 2.500 0L15.500 11l3.500-5q2-1 2 1l-3 8q0 5-3 8z" fill="#f7f7f5" stroke={INK} />,
    orbit: (
        <>
            <ellipse cx="12" cy="14" rx="9" ry="7" fill="#fff" stroke={INK} />
            <path d="M11 3q9 2 9 11h-9z" fill="#9ccb7f" stroke="#3d6b2c" />
            <path d="M11 1v14h12M11 15L2 22" fill="none" stroke="#111" strokeWidth="1.4" />
            <path d="M11 0l2.5 3h-5zM24 15l-3-2.5v5zM0 24l1-5 4 4z" fill="#111" />
        </>
    ),
    maximize: (<><path d="M16 10h7v13h-12v-5" fill="none" stroke={INK} strokeWidth="1.6" /><path d="M1 1h16v17H1z" fill="#eceff1" stroke={INK} strokeWidth="1.3" /><path d="M12 13L6 6M6 10.5V6h4.5" fill="none" stroke="#111" strokeWidth="1.5" /></>),
};

const Axis = ({ name }) => (
    <>
        <label htmlFor={`axis-${name}`} className="w-[37px] shrink-0">{name}:</label>
        <input id={`axis-${name}`} className={clsx(FIELD, 'mr-[30px] h-[44px] w-[120px] shrink-0')} />
    </>
);

const StatusBar = () => (
    <footer className="flex h-[105px] shrink-0 bg-[#f0f0f0] whitespace-nowrap">
        <div className="w-[222px] shrink-0 border-r-2 border-[#a8a8a8] pt-[5px] pl-[3px]">
            <input aria-label="マクロ レコーダ" className="block h-[46px] w-[205px] border-2 border-t-4 border-[#808080] border-r-white border-b-[#e6d8d8] bg-[#dac3c3]" />
            <input aria-label="MAXScript リスナー" defaultValue="MAXScript によう" className="mt-[3px] block h-[46px] w-[205px] border-2 border-t-4 border-[#808080] border-r-[#e3e3e3] border-b-[#e3e3e3] bg-white pl-2.5 text-[24px]" />
        </div>
        <div className="flex min-w-0 flex-1 flex-col pt-[9px] pl-1">
            <div className="flex h-[44px] items-center">
                <p className={clsx(SUNKEN, 'h-[44px] min-w-0 flex-1 overflow-hidden pl-[11px] leading-[40px]')}>1 個のシェイプが選択されました</p>
                <button aria-label="選択範囲を隔離" className="flex w-[56px] justify-center">
                    <svg viewBox="0 0 12 22" className="h-[36px] w-[24px]" aria-hidden="true"><path d="M6 1q5 0 5 6 0 5-4 9H5Q1 12 1 7q0-6 5-6z" fill="#d77680" stroke="#5b2a2e" /><path d="M4.5 17v4M7.5 17v4" stroke={INK} strokeWidth="1.2" /><path d="M3.5 7q0-3 2-3.5" stroke="#fff" fill="none" /></svg>
                </button>
                <button aria-label="選択をロック" className="flex w-[56px] justify-center">
                    <svg viewBox="0 0 14 20" className="h-[34px] w-[26px]" aria-hidden="true"><path d="M3.5 9V5a3.5 3.5 0 0 1 7 0v4" fill="none" stroke={INK} strokeWidth="1.8" /><rect x="1" y="9" width="12" height="10" fill="#eed9b3" stroke={INK} strokeWidth="1.2" /><path d="M7 12v4" stroke={INK} strokeWidth="1.5" /></svg>
                </button>
                <button aria-label="絶対モード変換入力" className="flex w-[56px] justify-center">
                    <svg viewBox="0 0 20 20" className="size-[34px]" aria-hidden="true"><rect x="1" y="1" width="18" height="18" fill="#edf0f3" stroke={INK} strokeWidth="1.5" /><path d="M10 1v18M1 10h18" stroke={INK} /><circle cx="10" cy="10" r="4.5" fill="#fff" stroke={INK} strokeWidth="1.3" /></svg>
                </button>
                <span className="w-2 shrink-0" />
                <Axis name="X" />
                <Axis name="Y" />
                <Axis name="Z" />
                <p className={clsx(SUNKEN, 'h-[44px] w-[209px] shrink-0 pl-[10px] leading-[40px]')}>グリッド = 10.0</p>
            </div>
            <div className="mt-[9px] flex h-[43px]">
                <p className={clsx(SUNKEN, 'min-w-0 flex-1 overflow-hidden border-b-0 pl-[11px] leading-[40px]')}>クリックまたはドラッグをして、オブジェクトを選択します</p>
                <button aria-label="適応デグラデーション" className={clsx(SUNKEN, 'mx-[6px] flex w-[46px] shrink-0 items-center justify-center border-b-0 bg-[#eecb50]')}>
                    <svg viewBox="0 0 18 20" className="h-[34px] w-[30px]" aria-hidden="true"><path d="M2 5l3-4h12v14l-3 4H2z" fill="#fff" stroke={INK} strokeWidth="1.5" /><path d="M2 5h12v14M14 5l3-4" fill="none" stroke={INK} /></svg>
                </button>
                <p className={clsx(SUNKEN, 'w-[209px] shrink-0 border-b-0 pl-[10px] leading-[40px]')}>時間タグを追加</p>
            </div>
        </div>
        <PushButton className="mt-[7px] ml-[9px] h-[92px] w-[90px] shrink-0">
            <svg viewBox="0 0 26 14" className="h-[28px] w-[52px]" aria-label="キーを設定"><circle cx="5" cy="6" r="4" fill="none" stroke="#000" strokeWidth="2" /><path d="M9 4h16v4H9zM18 8h2v4h-2zM22 8h2v4h-2z" /></svg>
        </PushButton>
        <div className="mt-[7px] ml-[9px] w-[134px] shrink-0">
            <PushButton className="h-[46px] w-full">オート キー</PushButton>
            <PushButton className="h-[46px] w-full">セット キー</PushButton>
        </div>
        <div className="mt-[7px] ml-2 w-[242px] shrink-0">
            <DropDown label="キー モード" value="選択" className="h-[43px] w-full" />
            <div className="mt-1.5 flex h-[43px]">
                <button aria-label="新規キーの既定の接線" className="relative w-[55px] pr-2">
                    <svg viewBox="0 0 24 24" className="mx-auto h-[38px] w-[38px]" fill="none" aria-hidden="true"><path d="M2 12q3 10 6 9T14 3q3-2 7 8" stroke="#c82020" strokeWidth="1.8" /><path d="M10 2h11M1 22h13" stroke="#6a6ad0" strokeWidth="1.8" strokeDasharray="2 1" /></svg>
                    <Corner />
                </button>
                <PushButton className="flex-1">キー フィルタ...</PushButton>
            </div>
        </div>
        <div className="mt-[9px] ml-[14px] w-[266px] shrink-0">
            <div className="flex h-[42px] items-center">
                <Play kind="start" className="w-[52px]" />
                <VLine className="mx-px" />
                <Play kind="prev" />
                <Play kind="play" flyout />
                <Play kind="next" />
                <VLine className="mx-px" />
                <Play kind="end" />
                <VLine className="mx-2" />
            </div>
            <div className="mt-1.5 flex h-[43px] items-center">
                <Play kind="key" className="w-[52px]" />
                <VLine className="mx-px" />
                <input aria-label="現在のフレーム" defaultValue="0" className={clsx(FIELD, 'h-[43px] w-[134px] shrink-0 pl-1 text-[22px]')} />
                <Arrows className="ml-[2px] h-[36px]" />
                <button aria-label="時間設定" className="ml-2.5">
                    <svg viewBox="0 0 22 24" className="h-[38px] w-[36px]" aria-hidden="true"><rect x="1" y="1" width="16" height="21" fill="#e9ecef" stroke={INK} /><rect x="3" y="3" width="8" height="8" fill="#2c5f9b" stroke={INK} strokeWidth=".6" /><path d="M13 3h2v8h-2zM6 15v4M4 17h4" stroke="#8b95a3" /><circle cx="16" cy="17" r="5.5" fill="#fff" stroke={INK} strokeWidth="1.3" /><path d="M16 13.5V17h3.5" fill="none" stroke="#111" strokeWidth="1.5" /></svg>
                </button>
            </div>
        </div>
        <div className="mt-[8px] grid shrink-0 grid-cols-[49px_49px_49px_49px] content-start gap-y-[4px] pr-[6px]">
            {Object.entries(NAV).map(([name, art]) => (
                <button key={name} aria-label={name} className="relative flex h-[44px] items-center justify-center">
                    <svg viewBox="0 0 24 24" className="size-[38px]" aria-hidden="true">{art}</svg>
                    {['extents', 'extentsAll', 'pan', 'orbit'].includes(name) && (
                        <svg viewBox="0 0 4 6" className="absolute right-0 bottom-0 h-2 w-1.5" aria-hidden="true"><path d="M4 0v6H0z" /></svg>
                    )}
                </button>
            ))}
        </div>
    </footer>
);

/* ---------- Quad menu ---------- */

const TOOL1 = [
    [{ t: 'スプラインを反転' }, { t: '始点を選択' }],
    [{ t: '分割' }],
    [{ t: 'バインド' }, { t: 'バインド解除' }],
    [{ t: 'ベジェ コーナー' }, { t: 'ベジェ' }, { t: 'コーナー', on: true }, { t: 'スムーズ' }, { t: '接線をリセット', off: true }],
    [{ t: 'スプライン' }, { t: 'セグメント' }, { t: '頂点', on: true }, { t: 'トップレベル' }],
];
const DISPLAY = [
    [{ t: 'ビューポート 照明と影', sub: true }],
    [{ t: '分離ツール' }, { t: '分離を終了', off: true }],
    [{ t: 'すべてをフリーズ解除' }, { t: '選択をフリーズ' }],
    [{ t: '名前による表示' }, { t: 'すべて表示' }, { t: '選択以外を非表示' }, { t: '選択を非表示', last: true }],
    [{ t: 'ステート セット', sub: true }, { t: 'ステート セットを管理...' }],
];
const TOOL2 = [
    [{ t: 'ラインを作成' }, { t: 'アタッチ' }, { t: 'セグメントをデタッチ' }],
    [{ t: '接続' }],
    [{ t: 'リファイン' }, { t: '接続をリファイン' }],
    [{ t: '頂点を循環' }, { t: '頂点をブレーク' }, { t: '頂点を連結' }, { t: 'ヒューズ頂点' }],
];
const TRANSFORM = [
    [{ t: '移動', box: true }, { t: '回転', box: true }, { t: 'スケール', box: true }, { t: '選択' }, { t: '類似したものを選択', k: 'S', off: true }],
    [{ t: 'クローン作成', k: 'C' }],
    [{ t: 'オブジェクト プロパティ', k: 'P', tail: '...' }],
    [{ t: 'カーブ エディタ...' }, { t: 'ドープ シート...' }, { t: 'ワイヤ パラメータ...' }],
    [{ t: '変換:', sub: true }, { t: 'V-Ray properties' }, { t: 'V-Ray scene converter' }, { t: 'V-Ray mesh export' }, { t: 'V-Ray VFB' }, { t: '.vrscene exporter' }, { t: '.vrscene animation exporter' }, { t: 'V-Ray Bitmap to VRayHDRI converter' }],
];

const QuadItem = ({ item, right }) => (
    <button
        role="menuitem"
        disabled={item.off}
        className={clsx(
            'relative flex h-[34px] w-full items-center whitespace-nowrap disabled:text-[#8a8a8a]',
            right ? 'justify-end pr-[36px]' : 'pl-[35px]',
            item.last && 'text-[#0000ff]',
        )}
    >
        {item.t}
        {item.k && <span>(<u>{item.k}</u>){item.tail}</span>}
        {item.on && <svg viewBox="0 0 14 18" className="absolute right-2 h-[22px] w-[20px]" aria-hidden="true"><path d="M2 10l3.5 5L12 2" fill="none" stroke="#000" strokeWidth="3" /></svg>}
        {item.sub && <svg viewBox="0 0 10 18" className="absolute right-[16px] h-[20px] w-[11px]" aria-hidden="true"><path d="M0 0l10 9-10 9z" /></svg>}
        {item.box && <svg viewBox="0 0 18 18" className="absolute right-[3px] size-[19px]" aria-hidden="true"><path d="M1 1h16v16H1z" fill="none" stroke="#000" strokeWidth="2" /><path d="M1 1h16v5H1z" /></svg>}
    </button>
);

const Quad = ({ groups, right, className }) => (
    <div role="menu" className={clsx('border-x-2 border-t-2 border-black bg-[#c0c0c0]', className)}>
        {groups.map((g) => (
            <div key={g[0].t} className="-mt-px border-b-2 border-black last:border-b-0">
                {g.map((item) => <QuadItem key={item.t} item={item} right={right} />)}
            </div>
        ))}
    </div>
);

const QuadMenu = () => (
    <div className="absolute top-[422px] left-[1618px] font-['DejaVu_Sans','Noto_Sans_CJK_JP',sans-serif] text-[23px] [font-feature-settings:'palt']">
        <div className="flex items-end pl-[21px]">
            <Quad groups={TOOL1} right className="w-[242px] pt-[14px] text-[22px]" />
            <Quad groups={DISPLAY} className="-ml-[2px] w-[307px]" />
        </div>
        <div className="flex h-[36px] pl-[21px] font-bold">
            <div className="flex w-[242px] items-center border-2 border-b-0 border-black bg-[#808080] pl-[2px]">ツール 1</div>
            <div className="-ml-[2px] flex w-[307px] items-center justify-end border-2 border-b-0 border-black bg-[#808080] pr-[7px]">表示</div>
        </div>
        <div className="flex h-[36px] font-bold">
            <div className="flex w-[263px] items-center border-2 border-b-0 border-black bg-[#808080] pl-[2px]">ツール 2</div>
            <div className="-ml-[2px] flex w-[502px] items-center justify-end border-2 border-b-0 border-black bg-[#808080] pr-[7px]">変換</div>
        </div>
        <div className="flex items-start">
            <Quad groups={TOOL2} right className="w-[263px] border-b-2 pb-[5px] text-[22px]" />
            <Quad groups={TRANSFORM} className="-ml-[2px] w-[502px] border-b-2" />
        </div>
    </div>
);

/* ---------- Tutorial annotations ---------- */

const NOTE = 'absolute text-[61px] leading-[107px] font-[350] whitespace-nowrap';

const Annotations = () => (
    <>
        <svg viewBox="0 0 4096 2914" preserveAspectRatio="none" className="pointer-events-none absolute inset-0 h-full w-full" fill="none" aria-hidden="true">
            <path d="M1137 1018L1641 629" stroke="#8fc31f" strokeWidth="6" />
            <ellipse cx="1765" cy="630" rx="124" ry="25" stroke="#00693a" strokeWidth="7" />
            <g stroke="#e60012" strokeWidth="6">
                <ellipse cx="3778" cy="545" rx="33" ry="37" />
                <path d="M3754 572L3432 1047" />
                <circle cx="3816" cy="1512" r="38" />
                <path d="M3498 1256L3788 1490" />
            </g>
            <circle cx="1743" cy="1671" r="73" stroke="#1d2088" strokeWidth="4" />
            <path d="M2380 1993L1860 1731" stroke="#1d2088" strokeWidth="6" />
            <path d="M1821 1711L1884 1716 1866 1734 1858 1760z" fill="#1d2088" />
        </svg>
        <p className={clsx(NOTE, 'top-[1033px] left-[280px] text-[#8fc31f] [text-spacing-trim:trim-start]')}>
            ③選択しているラインを右クリックして<br />「ベジェコーナー」を選択します。
        </p>
        <p className={clsx(NOTE, 'top-[1052px] left-[2453px] text-[#e60012] [text-spacing-trim:trim-start]')}>
            ②作成したラインを選択した状態で<br />
            <span className="[font-feature-settings:'halt']">「修正」→「</span>エッジ」を使い全選択します。
        </p>
        <p className={clsx(NOTE, 'top-[1942px] left-[2390px] text-[#1d2088]')}>選択されている場合は赤色になります。</p>
    </>
);

export default function App() {
    return (
        <div className="relative flex h-screen flex-col bg-white pt-[389px] pr-[28px] pb-[390px] pl-[29px] font-['Noto_Sans_CJK_JP',sans-serif] text-black">
            <div className="flex min-h-0 flex-1 flex-col bg-[#f0f0f0] font-['DejaVu_Sans_Condensed','Noto_Sans','Noto_Sans_CJK_JP',sans-serif] text-[22px] [font-feature-settings:'palt']">
                <MenuBar />
                <ToolBar />
                <div className="flex min-h-0 flex-1">
                    <SideRail />
                    <div className="flex min-w-0 flex-1 flex-col">
                        <Viewport />
                        <TimeLine />
                    </div>
                    <CommandPanel />
                </div>
                <StatusBar />
            </div>
            <QuadMenu />
            <Annotations />
        </div>
    );
}
